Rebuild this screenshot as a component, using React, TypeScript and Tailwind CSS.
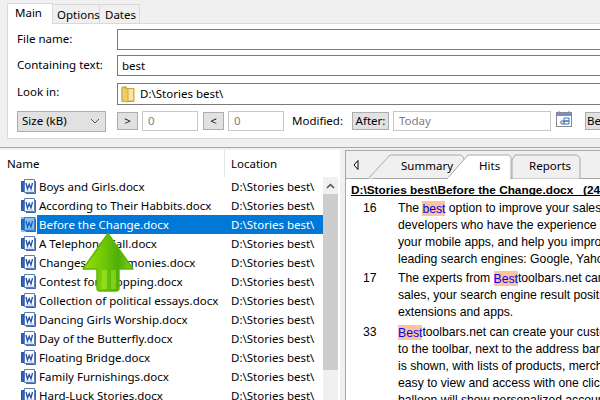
const FILES = [
  'Boys and Girls.docx',
  'According to Their Habbits.docx',
  'Before the Change.docx',
  'A Telephone Call.docx',
  'Changes in Ceremonies.docx',
  'Contest for Shopping.docx',
  'Collection of political essays.docx',
  'Dancing Girls Worship.docx',
  'Day of the Butterfly.docx',
  'Floating Bridge.docx',
  'Family Furnishings.docx',
  'Hard-Luck Stories.docx',
]

function WordIcon({ selected }: { selected: boolean }) {
  return (
    <svg width="17" height="16" viewBox="0 0 17 16" className="shrink-0">
      <path d="M1.500 2.500h3v10h-3z" fill="#2f62bd" stroke="#2a5299" />
      <path d="M4.500 .5h10v13h-10z" fill="#fff" stroke="#5a7fb8" />
      <path d="M15.500 2v12.500H6" fill="none" stroke="#3f66ad" />
      <path d="M6 4l1.500 6 1.700-4.500L11 10l1.500-6" fill="none" stroke="#1f4fa8" strokeWidth="1.300" />
      <path d="M6 12h7" stroke="#a9bfe0" />
      {selected && <rect x="1" y="0" width="15" height="15" fill="#0078d7" opacity="0.45" />}
    </svg>
  )
}

function Hl({ children }: { children: string }) {
  return <span className="bg-[#fbc49a] text-[#0000ff] py-[0.5px]">{children}</span>
}

function Btn({ children, className = '' }: { children: string; className?: string }) {
  return (
    <div className={`h-[18px] shrink-0 flex items-center justify-center bg-[#e1e1e1] border border-[#adadad] text-black ${className}`}>
      {children}
    </div>
  )
}

function SmallInput({ children, className = '' }: { children: string; className?: string }) {
  return (
    <div className={`h-5 shrink-0 flex items-center px-[5px] bg-white border border-[#c8c8c8] text-[#808080] ${className}`}>
      {children}
    </div>
  )
}

function Hit({ num, lines, gap }: { num: string; lines: React.ReactNode[]; gap: string }) {
  return (
    <div className={`flex ${gap}`}>
      <div className="w-[47px] pl-[12px] shrink-0 leading-[17px]">{num}</div>
      <div>
        {lines.map((l, i) => (
          <div key={i} className="h-[17px] leading-[17px]">{l}</div>
        ))}
      </div>
    </div>
  )
}

export default function App() {
  return (
    <div className="w-[600px] h-[400px] overflow-hidden relative bg-[#f0f0f0] text-[11.5px] text-black whitespace-nowrap font-['Noto_Sans','Open_Sans',sans-serif]">
      {/* Search form */}
      <div className="h-[147px] pl-[7px] flex flex-col">
        <div className="h-[23px] flex items-end pt-[2px]">
          <div className="w-[46px] h-[21px] bg-white border border-b-0 border-[#d9d9d9] pl-[7px] leading-[18px] relative z-10 -mb-px">Main</div>
          <div className="w-[47px] h-[19px] bg-[#f0f0f0] border border-l-0 border-b-0 border-[#d9d9d9] pl-[4px] leading-[20px]">Options</div>
          <div className="w-[40px] h-[19px] bg-[#f0f0f0] border border-l-0 border-b-0 border-[#d9d9d9] pl-[5px] leading-[20px]">Dates</div>
        </div>
        <div className="h-[116px] bg-white border border-r-0 border-[#d9d9d9] pl-[9px] flex flex-col">
          <div className="h-[26px] mt-[5px] flex items-start">
            <div className="w-[100px] shrink-0 leading-[17px] pt-[1px]">File name:</div>
            <div className="flex-1 h-[21px] border border-r-0 border-[#7a7a7a]" />
          </div>
          <div className="h-[28px] flex items-start">
            <div className="w-[100px] shrink-0 leading-[17px] pt-[1px]">Containing text:</div>
            <div className="flex-1 h-[21px] border border-r-0 border-[#7a7a7a] pl-[4px] leading-[20px]">best</div>
          </div>
          <div className="h-[27px] flex items-start">
            <div className="w-[100px] shrink-0 leading-[17px]">Look in:</div>
            <div className="flex-1 h-[22px] border border-r-0 border-[#7a7a7a] pl-[3px] flex items-center gap-[5px]">
              <svg width="14" height="18" viewBox="0 0 14 18" className="shrink-0">
                <path d="M1 2.500l4-1 1 2h7v13H1z" fill="#e9c860" stroke="#c9a53e" />
                <path d="M5 4h7v11H5z" fill="#f8e7a4" />
                <path d="M1 2l6 2v13l-6-1z" fill="#f0cd62" stroke="#cda83f" />
              </svg>
              <span>D:\Stories best\</span>
            </div>
          </div>
          <div className="h-5 flex items-center mt-[1px]">
            <div className="w-[89px] h-[21px] shrink-0 flex items-center justify-between pl-[4px] pr-[5px] bg-[#e1e1e1] border border-[#adadad]">
              <span>Size (kB)</span>
              <svg width="10" height="6" viewBox="0 0 10 6">
                <path d="M1 1l4 4 4-4" fill="none" stroke="#555" />
              </svg>
            </div>
            <Btn className="w-[21px] ml-[11px]">&gt;</Btn>
            <SmallInput className="w-[56px] ml-[4px]">0</SmallInput>
            <Btn className="w-[21px] ml-[5px]">&lt;</Btn>
            <SmallInput className="w-[56px] ml-[4px]">0</SmallInput>
            <div className="ml-[8px] w-[60px] shrink-0">Modified:</div>
            <Btn className="w-[37px]">After:</Btn>
            <SmallInput className="w-[158px] ml-[4px]">Today</SmallInput>
            <svg width="17" height="16" viewBox="0 0 17 16" className="shrink-0 ml-[5px] -mt-1">
              <rect x="0.500" y="1.500" width="15" height="14" fill="#fff" stroke="#8a8a8a" />
              <rect x="1" y="2" width="14" height="3" fill="#6f8fd6" />
              <path d="M3 0v3M13 0v3" stroke="#6f8fd6" />
              <path d="M8 7h5v3H8zM5 10h3v3H5zM8 10h5v3H8z" fill="#fff" stroke="#3f70c0" />
            </svg>
            <Btn className="w-[30px] ml-[12px] pl-px !justify-start">Before:</Btn>
          </div>
        </div>
      </div>

      <div className="h-[253px] border-t border-[#a8a8a8] flex">
        {/* File list */}
        <div className="w-[340px] shrink-0 bg-white mt-[2px] flex flex-col">
          <div className="h-[27px] shrink-0 flex items-center">
            <div className="w-[224px] pl-[7px] pt-[1px]">Name</div>
            <div className="h-full border-l border-[#e5e5e5] pl-[6px] flex items-center">Location</div>
          </div>
          <div className="flex-1 flex overflow-hidden">
            <div className="w-[323px] shrink-0 pl-[20px]">
              {FILES.map((name) => {
                const sel = name === 'Before the Change.docx'
                return (
                  <div key={name} className="h-[19px] flex items-center">
                    <WordIcon selected={sel} />
                    <div className={`flex-1 h-full flex items-center pt-px ${sel ? 'bg-[#0078d7] text-white' : ''}`}>
                      <div className="w-[194px] pl-[2px] shrink-0">{name}</div>
                      <div>D:\Stories best\</div>
                    </div>
                  </div>
                )
              })}
            </div>
            <div className="w-[15px] shrink-0 bg-[#f0f0f0] flex flex-col">
              <div className="h-[17px] shrink-0 flex items-center justify-center">
                <svg width="9" height="6" viewBox="0 0 9 6">
                  <path d="M1 5l3.500-3.500L8 5" fill="none" stroke="#505050" strokeWidth="1.500" />
                </svg>
              </div>
              <div className="h-[176px] bg-[#cdcdcd]" />
            </div>
          </div>
        </div>

        {/* Splitter */}
        <div className="w-[5px] shrink-0" />

        {/* Hits pane */}
        <div className="flex-1 min-w-0 bg-white border-l border-t border-[#a8a8a8] mt-[2px] overflow-hidden text-[12.2px] font-['Liberation_Sans',Arial,sans-serif]">
          <div className="h-[28px] bg-[#f0f0f0] border-b border-[#a8a8a8] relative text-[11.5px] font-['Noto_Sans','Open_Sans',sans-serif] flex items-center">
            <svg width="6" height="10" viewBox="0 0 6 10" className="ml-[7px]">
              <path d="M5 .5v9L1 5z" fill="#fff" stroke="#000" />
            </svg>
            <svg width="254" height="28" viewBox="0 0 254 28" className="absolute left-0 top-0">
              <path d="M22 28L44 4h71l3 3v6" fill="#f0f0f0" stroke="#a8a8a8" />
              <path d="M166 28V9l3-5h62l3 3v21z" fill="#f0f0f0" stroke="#a8a8a8" />
              <path d="M101 28L122 4h41l2 2v22z" fill="#fff" stroke="#a8a8a8" />
              <path d="M102 27.500h62" stroke="#fff" strokeWidth="2" />
            </svg>
            <span className="absolute left-[55px] top-[6px]">Summary</span>
            <span className="absolute left-[133px] top-[6px]">Hits</span>
            <span className="absolute left-[183px] top-[6px]">Reports</span>
          </div>
          <div className="pl-[5px] pt-[4px]">
            <div className="h-[13px] leading-[15px] text-[11.8px] font-bold border-b border-black mb-[4px] whitespace-pre">
              {'D:\\Stories best\\Before the Change.docx   (24 hits)'}
            </div>
            <Hit num="16" gap="mb-[2px]" lines={[
              <>The <Hl>best</Hl> option to improve your sales and conversions</>,
              'developers who have the experience to',
              'your mobile apps, and help you improve',
              'leading search engines: Google, Yahoo',
            ]} />
            <Hit num="17" gap="mb-[3px]" lines={[
              <>The experts from <Hl>Best</Hl>toolbars.net can</>,
              'sales, your search engine result position',
              'extensions and apps.',
            ]} />
            <Hit num="33" gap="mb-0" lines={[
              <><Hl>Best</Hl>toolbars.net can create your custom</>,
              'to the toolbar, next to the address bar',
              'is shown, with lists of products, merchandise',
              'easy to view and access with one click',
              'balloon will show personalized accounts',
            ]} />
          </div>
        </div>
      </div>

      {/* Green arrow over the list */}
      <svg width="54" height="60" viewBox="0 0 54 60" className="absolute left-[81px] top-[232px]">
        <defs>
          <linearGradient id="arrowFill" x1="0" x2="1" y1="0" y2="0">
            <stop offset="0" stopColor="#9be000" />
            <stop offset="0.45" stopColor="#6cc50a" />
            <stop offset="0.7" stopColor="#4fae0a" />
            <stop offset="1" stopColor="#7fd010" />
          </linearGradient>
        </defs>
        <path d="M27 1.500L52 37H38V56q0 3-3 3H19q-3 0-3-3V37H2z" fill="url(#arrowFill)" stroke="#5cb800" strokeWidth="1.500" strokeLinejoin="round" />
        <path d="M21 38h5V57h-6z" fill="#a8ea2a" opacity="0.6" />
        <path d="M30 38h5V57h-5z" fill="#9fe52a" opacity="0.55" />
      </svg>
    </div>
  )
}
